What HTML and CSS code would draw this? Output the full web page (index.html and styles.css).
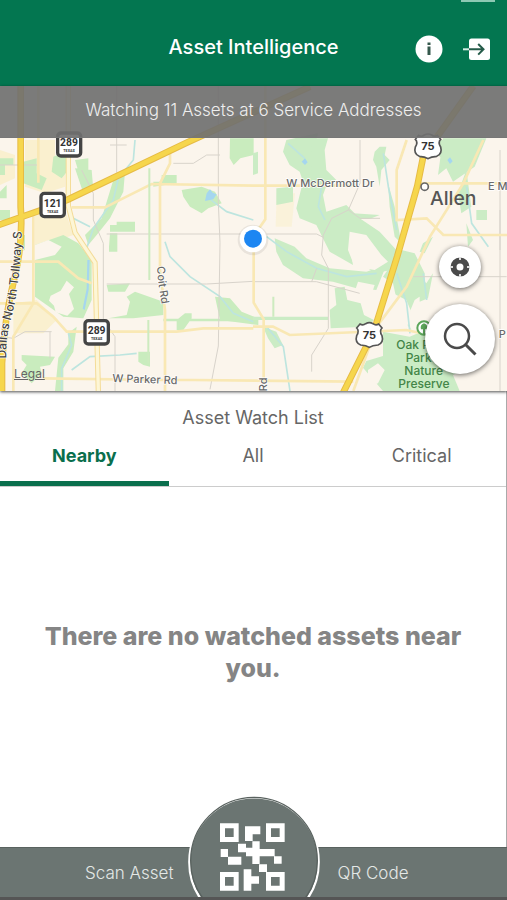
FILE: index.html
```html
<!DOCTYPE html>
<html lang="en">
<head>
    <meta charset="UTF-8">
    <meta name="viewport" content="width=device-width, initial-scale=1.0">
    <title>Asset Intelligence</title>
    <link rel="stylesheet" href="styles.css">
</head>
<body>
    <!-- Header -->
    <header class="app-header">
        <span class="battery"></span>
        <h1>Asset Intelligence</h1>
        <div class="header-actions">
            <button type="button" class="icon-button" aria-label="Information">
                <svg width="28" height="28" viewBox="0 0 28 28">
                    <circle cx="14" cy="14" r="13.5" fill="#fff"/>
                    <path d="M12.5 7.500h3v2.500h-3zM12.500 11.500h3v8.500h-3z" fill="#35584c"/>
                </svg>
            </button>
            <button type="button" class="icon-button" aria-label="Sign out">
                <svg width="28" height="28" viewBox="0 0 28 28">
                    <rect x="6" y="3.5" width="21" height="21.5" rx="2.5" fill="#fff"/>
                    <path d="M0 14.3h6" stroke="#d5eee5" stroke-width="2"/>
                    <path d="M6 14.3h14M15.2 9l5.3 5.3-5.3 5.3" fill="none" stroke="#245b49" stroke-width="2"/>
                </svg>
            </button>
        </div>
    </header>

    <!-- Map -->
    <section class="map">
        <svg class="map-canvas" viewBox="0 -132 1521 915" preserveAspectRatio="xMidYMid slice" aria-label="Map">
            <rect y="-132" width="1521" height="915" fill="#fbf5ec"/>

            <!-- built-up areas -->
            <g fill="#faf0cf">
                <path d="M75 30h90v55l30 15v70l-60 20-60-20zM0 60l45 15v70l-45 20z"/>
                <path d="M105 250l95 5 20 60-115 40zM40 520l70-10 60 60-40 40H40z"/>
                <path d="M830 190h55l-10 100h-48z" opacity=".6"/>
            </g>

            <!-- parks -->
            <g fill="#c9ecbe">
                <path d="M105 345l85-30 45 25 40 50v120l-25 55-60-5-85-60v-90z"/>
                <path d="M70 95l40-10v45l30 15-15 35-55-20zM160 80l45-20v60l-20 25-30-20z"/>
                <path d="M0 85h40v20H15v30H0zM0 185l20-20v40H0zM225 90l40-5v50l-25 5zM225 115l50 5 5 60-30 10z"/>
                <path d="M340 150l35-25-5 60-40 80-40 50-25 30-10-30 50-50zM350 275h55v30h-75v-20h20zM330 310h22v55h-25v-15z"/>
                <path d="M485 135h45v25l-70 10v-15h25zM545 180l60-10 40 15 20 35-40 15-20 15-35-20-20-30z"/>
                <path d="M320 465l70-5-15 25h-50zM325 565l55-10 10-40-10-15 25-15 85 30v40l-90 10zM490 566h250v8H490zM555 550h20v15l-25 35h-20v-30zM415 665h35v45l-20-5-15-10z"/>
                <path d="M645 500l45 5 35 40 50 20v20l-115-15zM65 675l100 5-15 25-30 5 5 20-30 30-30-30 15-25-15-15z"/>
                <path d="M205 610l25-20-10 75-30 50v68h-25l10-100 30-40zM690 25h71v50l-40 10-20 20-12-20zM0 240h30v30H0zM50 315h25v45l-20 5z"/>
            </g>
            <path d="M200 452l22 20-15 20 15 45-20 20-35-10-5-20-15-15 5-15 30-15zM105 345l40-15 40 20-20 25-60 15z" fill="#fbf5ec"/>

            <g transform="translate(759 0)" fill="#cbecc5">
                <path d="M0 70l15-5v65l-15 5zM100 30l-10 35 20 40 30 20 10 30-20 80 10 30 50 20 40 80 70 40-10-60 60 20-30-70-60-30-40-20-10-50 20-55-30-30-20-40 15-60z"/>
                <path d="M175 25h50l-10 35 5 60 30 30-30 10-45-15zM70 175l50-5v45l-50 10zM365 65l15-15h20l-5 25 15 15-25 30-5 50-10-60-10-20z"/>
                <path d="M220 245l60-20 40 40 60 40 50 55-15 60-50 10-80-60-50-50z"/>
                <path d="M65 325l60 25 35 35 70 30 110 10 60-20-30 75-60-5-70-20-90-10-60-40-20-40z"/>
                <path d="M300 250l80 5-30 12h-40zM405 160l20 70 20 110-20-20-15-90z"/>
                <path d="M245 475l30-5 8 40 40 10 10 35 30 15-20 20-110 5-3-55 20-15zM0 560h225v10H0z"/>
                <path d="M570 25h130l-35 85-65 45-20-40-25 20zM670 240h32v30h-32zM560 30h20l-10 60-20-20z"/>
                <path d="M445 360l40 10 30 60v60l-30 20-25 60 20 40-40-60-20-90-30-20zM510 340l30-20-25 50-15-5zM500 440l20 20 20-30-15 75-25 10z"/>
                <path d="M390 605l80 15 60-25 130 110-60 30 20 48H390l-60-70 10-20 50-15z"/>
                <path d="M640 120l15 110-30 20-10-60zM640 280l20 50-15 20zM30 590l40 15 20 40-25 10-20-30z"/>
            </g>
            <g transform="translate(759 0)" fill="#fbf5ec">
                <path d="M290 305l50 10 45 60 20 20-40 25-60-10-20-50zM420 490l40 20 25 60-30 20-80-20 30-60zM315 455l50 10-10 30-50-10z"/>
                <path d="M345 720l30-20 20 20-20 40-30 10z"/>
            </g>

            <!-- water -->
            <g fill="none" stroke="#bde5df" stroke-width="5">
                <path d="M405 30l-5 60-45 55-15 65-60 85-20 60"/>
                <path d="M620 200l60 45 80 25M495 335l15 45 60 60 90 60 40 50 60 25"/>
                <path d="M205 235l15 30 50 25M215 720l55-40 90-5 50-5M205 610l10 35-30 70v68"/>
                <path d="M864 40l50 45M965 170l-10 60 20 40M800 320l60 45 90 50 90 25 90-10M800 590l50 60 20 133"/>
                <path d="M1150 70l15 100 25 130M1190 430l30 90 10 90M1400 170l15 110 50 70M1270 430l10 80"/>
            </g>
            <path d="M620 190l10-12 8 10 12 5-10 15-25 5zM905 95l10-10 8 12-8 8zM1342 90l8-8 8 12-8 8zM262 390h7l-3 90-12 60-6-4 12-60z" fill="#a5d6ef"/>

            <!-- small streets -->
            <g fill="none" stroke="#d8d3cb" stroke-width="3">
                <path d="M350-132v260M655-132v350l5 120-5 310-25 130M0 105h115M320 312h440M320 462h300l140-8"/>
                <path d="M245 120l35 70v80l30 70v230l35 50v163M0 620l40 5 35-20h80M330 45h50M520 100h60l40-25h40M150 605v80"/>
                <path d="M1080 30v130l-35 80 35 25h60M1045 240l-50 25-25 50-5 60 20 40v180l-50 80v50M800 312h150l20 10M759 455h190l130 35"/>
                <path d="M1240 440h280M1500 60v300M1500 240v543M935 455l15-40"/>
            </g>

            <!-- secondary roads -->
            <g fill="none" stroke="#f9e8b4" stroke-width="8">
                <path d="M115-132v290M100 240v280M0 395h175l60 50 40 15M0 520h110l50 40 40 45h330l80-10h150"/>
                <path d="M215 232h100l60-30 80-40 306 5h310M510 60v40l-30 60v260l15 120v243M40 783V620l60-100"/>
                <path d="M130 745l360 5h90l480 5M796-132v400l-35 50v200l30 50v180M759 590h60l50 25 350-15 140 30"/>
                <path d="M1220 30l-30 90v150l90-5 50 50h191M1450 30l-60 130-100 160-70 150-90 120-70 193M1250 160h271"/>
            </g>
            <path d="M205-132v360l20 80 60 90 10 385" fill="none" stroke="#f4dc98" stroke-width="16"/>
            <path d="M205-132v360l20 80 60 90 10 385" fill="none" stroke="#fdf6d6" stroke-width="10"/>
            <path d="M448 115v335M445 570v130M820 500v60" fill="none" stroke="#cdebbf" stroke-width="6"/>

            <!-- highways -->
            <g fill="none" stroke="#e6bb45" stroke-width="20">
                <path d="M-5 285l130-45 80-32 355-170L930-130M62-132V230q8 110-20 220T6 700v90"/>
                <path d="M1420-132l-150 210-18 90-60 210-70 225-95 190"/>
            </g>
            <g fill="none" stroke="#f6d64c" stroke-width="14">
                <path d="M-5 285l130-45 80-32 355-170L930-130M62-132V230q8 110-20 220T6 700v90"/>
                <path d="M1420-132l-150 210-18 90-60 210-70 225-95 190"/>
            </g>

            <!-- state route shields -->
            <g class="shield">
                <g fill="#fff" stroke="#444" stroke-width="10">
                    <rect x="173" y="9" width="69" height="69" rx="10"/>
                    <rect x="123" y="190" width="70" height="70" rx="10"/>
                    <rect x="255" y="572" width="70" height="70" rx="10"/>
                </g>
                <text x="207" y="47">289</text>
                <text x="158" y="230">121</text>
                <text x="290" y="612">289</text>
                <g class="shield-state">
                    <text x="207" y="65">TEXAS</text>
                    <text x="158" y="248">TEXAS</text>
                    <text x="290" y="629">TEXAS</text>
                </g>
            </g>

            <!-- interstate shields -->
            <defs>
                <path id="us-shield" d="M-28-33q9 6 17-1q11-6 22 0q8 7 17 1l10 12q-9 9 0 23q6 20-12 28q-17 1-26 7q-9-6-26-7q-18-8-12-28q9-14 0-23z" fill="#fff" stroke="#555" stroke-width="5"/>
            </defs>
            <use href="#us-shield" x="1284" y="49"/>
            <use href="#us-shield" x="1108" y="615"/>
            <g class="shield shield-us">
                <text x="1284" y="61">75</text>
                <text x="1108" y="626">75</text>
            </g>

            <!-- labels -->
            <defs>
                <path id="tollway" d="M19 686Q17 620 32 570T55 450T66 300"/>
                <path id="coit" d="M471 410Q474 465 488 540"/>
            </defs>
            <g class="label">
                <text x="859" y="172">W McDermott Dr</text>
                <text x="1464" y="181">E M</text>
                <text x="337" y="756" transform="rotate(2 337 756)">W Parker Rd</text>
                <text x="1496" y="624">P</text>
                <text class="label-road"><textPath href="#tollway">Dallas North Tollway S</textPath></text>
                <text><textPath href="#coit">Coit Rd</textPath></text>
                <text transform="translate(802 784) rotate(-90)">Rd</text>
            </g>
            <circle cx="1274" cy="170" r="11" fill="#fff" stroke="#666" stroke-width="5"/>
            <text class="label-city" x="1290" y="226">Allen</text>
            <circle cx="1272" cy="594" r="20" fill="#fff" stroke="#5da65b" stroke-width="6"/>
            <path d="M1272 580q-13 5-9 18h6v14h6v-14h6q4-13-9-18z" fill="#5da65b"/>
            <g class="label-park">
                <text x="1189" y="657">Oak Point</text>
                <text x="1217" y="696">Park &amp;</text>
                <text x="1213" y="735">Nature</text>
                <text x="1195" y="774">Preserve</text>
            </g>

            <!-- current position -->
            <circle cx="759" cy="330" r="46" fill="#000" opacity=".07"/>
            <circle cx="759" cy="327" r="40" fill="#fff"/>
            <circle cx="759" cy="326" r="27" fill="#1c86f2"/>
        </svg>

        <p class="map-banner">Watching 11 Assets at 6 Service Addresses</p>
        <a href="#legal" class="legal">Legal</a>
        <div class="map-buttons">
            <button type="button" class="round-button" aria-label="Locate me">
                <svg width="22" height="22" viewBox="0 0 22 22" fill="none">
                    <circle cx="11" cy="11" r="6.500" stroke="#4a4a4a" stroke-width="6"/>
                    <path d="M11 1v3M11 18v3M1 11h3M18 11h3" stroke="#ddd" stroke-width="2"/>
                </svg>
            </button>
            <button type="button" class="round-button search" aria-label="Search">
                <svg width="34" height="34" viewBox="0 0 34 34" fill="none" stroke="#4a4a4a" stroke-width="2.5">
                    <circle cx="14" cy="14" r="12"/>
                    <path d="M22.500 22.500l10 10" stroke-width="3"/>
                </svg>
            </button>
        </div>
    </section>

    <!-- Watch list -->
    <main class="watch-list">
        <h2>Asset Watch List</h2>
        <div class="tabs" role="tablist">
            <button type="button" class="tab active" role="tab" aria-selected="true">Nearby</button>
            <button type="button" class="tab" role="tab" aria-selected="false">All</button>
            <button type="button" class="tab" role="tab" aria-selected="false">Critical</button>
        </div>
        <p class="empty">There are no watched assets near you.</p>
    </main>

    <!-- Scan bar -->
    <footer class="scan-bar">
        <span class="scan-left">Scan Asset</span>
        <span class="scan-right">QR Code</span>
        <button type="button" class="scan-button" aria-label="Scan asset QR code">
            <svg width="132" height="101" viewBox="54 45 396 303">
                <circle cx="252" cy="243" r="194" fill="#6b7572" stroke="#fff" stroke-width="7"/>
                <circle cx="252" cy="239" r="190" fill="none" stroke="#59625f" stroke-width="4"/>
                <g fill="none" stroke="#fff" stroke-width="15">
                    <path d="M157.500 134.500h41v41h-41zM295.500 134.500h41v41h-41zM157.500 280.500h41v41h-41zM295.500 280.500h41v41h-41z"/>
                </g>
                <path d="M225 136h46v24h-23v20h-23zM247 181h22v23h45v22h-45v23h-22v-23h-19v-12h-24v-26h24v12h19zM152 204h22v23h40v24h-40v-23h-22zM312 226h23v22h-23zM221 265h23v21h23v22h-23v21h-23zM267 250h24v23h-24z" fill="#fff"/>
            </svg>
        </button>
    </footer>
</body>
</html>
```
FILE: styles.css
```css
* {
    box-sizing: border-box;
}

body {
    font-family: Inter, "Liberation Sans", sans-serif;
    margin: 0;
    min-height: 100vh;
    display: flex;
    flex-direction: column;
    background-color: #fff;
    color: #666;
}

h1, h2, p {
    margin: 0;
}

button {
    font: inherit;
    color: inherit;
    background: none;
    border: 0;
    padding: 0;
    cursor: pointer;
}

svg {
    display: block;
}

/* Header */
.app-header {
    position: relative;
    display: grid;
    grid-template-columns: 1fr auto 1fr;
    align-items: center;
    height: 86px;
    padding: 12px 16px 0;
    background-color: #037650;
    color: #fff;
}

.app-header h1 {
    grid-column: 2;
    font-size: 20px;
    font-weight: 500;
    line-height: 28px;
    padding-bottom: 4px;
}

.battery {
    position: absolute;
    top: 0;
    right: 12px;
    width: 34px;
    height: 2px;
    background-color: #8dc9b3;
}

.header-actions {
    display: flex;
    justify-content: flex-end;
    gap: 20px;
}

/* Map */
.map {
    position: relative;
    height: 305px;
    box-shadow: 0 1px 3px rgba(0, 0, 0, 0.7);
}

.map-canvas {
    width: 100%;
    height: 100%;
}

.map-banner {
    position: absolute;
    top: 0;
    left: 0;
    right: 0;
    padding: 12px 0 15px;
    background-color: rgba(112, 112, 112, 0.92);
    border-bottom: 1px solid #777;
    color: #eee;
    font-size: 17px;
    font-weight: 300;
    line-height: 24px;
    text-align: center;
}

.legal {
    position: absolute;
    left: 14px;
    bottom: 9px;
    color: #666;
    font-size: 12px;
    line-height: 16px;
}

.map-buttons {
    position: absolute;
    right: 12px;
    bottom: 17px;
    display: flex;
    flex-direction: column;
    align-items: center;
    gap: 16px;
}

.round-button {
    display: flex;
    align-items: center;
    justify-content: center;
    width: 42px;
    height: 42px;
    border-radius: 50%;
    background-color: #fff;
    box-shadow: 0 1px 5px rgba(0, 0, 0, 0.6);
}

.round-button.search {
    width: 70px;
    height: 70px;
}

.label {
    fill: #6a6a6a;
    stroke: #fff;
    stroke-width: 4px;
    paint-order: stroke;
    font-size: 33px;
    font-weight: 500;
}

.label-road {
    fill: #444;
    font-size: 36px;
}

.label-city {
    fill: #555;
    font-size: 58px;
    font-weight: 500;
}

.label-park {
    fill: #438548;
    font-size: 36px;
    font-weight: 500;
}

.shield {
    fill: #333;
    font-family: Roboto, sans-serif;
    font-size: 31px;
    font-weight: 700;
    text-anchor: middle;
}

.shield-state {
    font-size: 11px;
}

.shield-us {
    font-family: Inter, sans-serif;
    font-size: 33px;
}

/* Watch list */
.watch-list {
    flex: 1;
    display: flex;
    flex-direction: column;
    padding-top: 15px;
    border-right: 1px solid #aaa;
}

.watch-list h2 {
    font-size: 18px;
    font-weight: 400;
    line-height: 24px;
    text-align: center;
}

.tabs {
    display: grid;
    grid-template-columns: repeat(3, 1fr);
    border-bottom: 1px solid #ccc;
}

.tab {
    height: 56px;
    border-bottom: 5px solid transparent;
    font-size: 18px;
}

.tab.active {
    color: #0a6f4d;
    border-color: #0a6f4d;
    font-weight: 700;
}

.empty {
    margin: auto;
    padding: 0 32px 30px;
    color: #858585;
    font-size: 25px;
    font-weight: 800;
    line-height: 32px;
    text-align: center;
}

/* Scan bar */
.scan-bar {
    position: relative;
    display: grid;
    grid-template-columns: 1fr 1fr;
    column-gap: 164px;
    align-items: center;
    height: 53px;
    padding-left: 4px;
    background-color: #6b7572;
    border-top: 1px solid #59625f;
    border-bottom: 3px solid #555;
    color: #e4e8e6;
    font-size: 17px;
    font-weight: 300;
    line-height: 24px;
}

.scan-left {
    text-align: right;
}

.scan-button {
    position: absolute;
    left: 50%;
    bottom: 0;
    transform: translateX(-50%);
}
```
